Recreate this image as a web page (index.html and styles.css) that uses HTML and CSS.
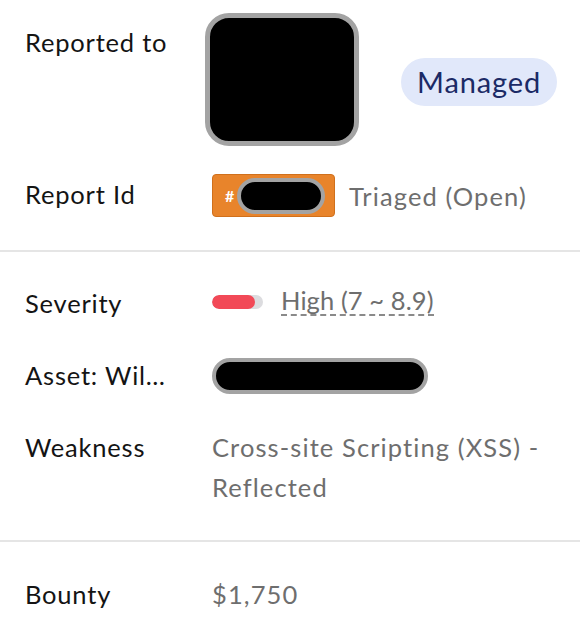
FILE: index.html
```html
<!DOCTYPE html>
<html>
<head>
<meta charset="utf-8">
<link rel="stylesheet" href="styles.css">
</head>
<body>
<div class="panel">
  <section class="section first">
    <div class="row row-reported">
      <div class="label label-top">Reported to</div>
      <div class="value value-reported">
        <div class="avatar"></div>
        <span class="pill-managed">Managed</span>
      </div>
    </div>
    <div class="row row-id">
      <div class="label">Report Id</div>
      <div class="value value-id">
        <span class="id-badge"><span class="hash">#</span><span class="redact redact-id"></span></span>
        <span class="muted">Triaged (Open)</span>
      </div>
    </div>
  </section>
  <hr class="divider">
  <section class="section mid">
    <div class="row">
      <div class="label">Severity</div>
      <div class="value value-sev">
        <span class="sev-track"><span class="sev-fill" style="width:84%"></span></span>
        <span class="muted sev-text">High (7 ~ 8.9)</span>
      </div>
    </div>
    <div class="row">
      <div class="label">Asset: Wil…</div>
      <div class="value value-asset">
        <span class="redact redact-asset"></span>
      </div>
    </div>
    <div class="row">
      <div class="label">Weakness</div>
      <div class="value muted">Cross-site Scripting (XSS) - Reflected</div>
    </div>
  </section>
  <hr class="divider">
  <section class="section last">
    <div class="row">
      <div class="label">Bounty</div>
      <div class="value muted">$1,750</div>
    </div>
  </section>
</div>
</body>
</html>
```

FILE: styles.css
```css
html, body {
  margin: 0;
  padding: 0;
  background: #ffffff;
}
body {
  font-family: Lato, "Open Sans", sans-serif;
  font-size: 25.5px;
  letter-spacing: 0.8px;
  color: #141414;
  width: 580px;
  overflow: hidden;
}
.panel {
  display: flex;
  flex-direction: column;
}
.section {
  display: flex;
  flex-direction: column;
  gap: 32px;
  padding: 31px 0 33px 25px;
}
.section.first {
  padding-top: 13px;
  gap: 28px;
  padding-bottom: 33px;
}
.section.last {
  padding-top: 32px;
}
.divider {
  margin: 0;
  border: 0;
  height: 2px;
  background: #e5e5e5;
}
.row {
  display: grid;
  grid-template-columns: 187px 1fr;
  line-height: 40px;
}
.label {
  color: #141414;
  white-space: nowrap;
}
.label-top {
  padding-top: 9px;
}
.value {
  color: #6e6e6e;
  padding-right: 20px;
}
.muted {
  color: #6e6e6e;
  letter-spacing: 1.1px;
}
.value-reported {
  display: flex;
  align-items: center;
  gap: 42px;
}
.avatar {
  width: 144px;
  height: 123px;
  background: #000;
  border: 5px solid #a3a3a3;
  border-radius: 24px;
  margin-left: -7px;
}
.pill-managed {
  background: #e1e8fa;
  color: #1b2a66;
  font-size: 29px;
  letter-spacing: 0.9px;
  line-height: 48px;
  padding: 0 16px;
  border-radius: 24px;
  margin-top: 5px;
}
.value-id {
  display: flex;
  align-items: center;
  gap: 14px;
}
.id-badge {
  display: flex;
  align-items: center;
  width: 123px;
  height: 43px;
  box-sizing: border-box;
  background: #e8842b;
  border: 1px solid #d0701c;
  border-radius: 4px;
  padding-left: 12px;
}
.hash {
  color: #ffffff;
  font-size: 16px;
  font-weight: 700;
  line-height: 1;
}
.redact {
  display: block;
  background: #000;
  border: 4px solid #a3a3a3;
  box-sizing: border-box;
  border-radius: 20px;
}
.redact-id {
  width: 88px;
  height: 36px;
  margin-left: 2px;
}
.value-asset {
  display: flex;
  align-items: center;
  height: 40px;
}
.redact-asset {
  width: 216px;
  height: 36px;
  margin-top: 2px;
}
.value-sev {
  display: flex;
  align-items: center;
  gap: 18px;
}
.sev-track {
  display: block;
  width: 51px;
  height: 14px;
  border-radius: 7px;
  background: #dcdcdf;
  margin-top: -3px;
  overflow: hidden;
}
.sev-fill {
  display: block;
  height: 100%;
  background: #f24957;
  border-radius: 7px;
}
.sev-text {
  line-height: 28px;
  letter-spacing: 0.1px;
  border-bottom: 2px dashed #8a8a8a;
  margin-top: -4px;
}
```
